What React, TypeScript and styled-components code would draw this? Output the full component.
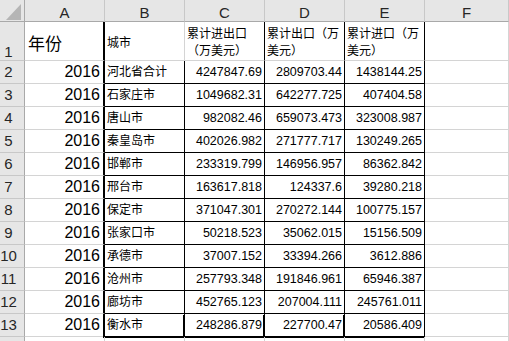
import React from 'react';
import styled, { createGlobalStyle, css } from 'styled-components';

const GRID = '#d4d4d4';
const HEAD_LINE = '#a9a9a9';
const HEAD_SEP = '#c8c8c8';
const HEAD_BG = '#e6e6e6';
const CJK = '"Noto Sans CJK SC", "Liberation Sans", sans-serif';

const GlobalStyle = createGlobalStyle`
  html, body { margin: 0; padding: 0; background: #fff; }
  body { font-family: "Liberation Sans", Arial, sans-serif; color: #000; }
`;

type Edge = 'grid' | 'black' | 'thick';
type Kind = 'year' | 'city' | 'num' | 'label' | 'title' | 'blank';

const edges: Record<Edge, string> = {
  grid: `1px solid ${GRID}`,
  black: '1px solid #000',
  thick: '2px solid #000',
};

const kinds: Record<Kind, ReturnType<typeof css>> = {
  year: css`
    font-size: 16px;
    line-height: 16px;
    justify-content: flex-end;
    align-items: flex-end;
    padding: 0 3px 3px 0;
  `,
  city: css`
    font-family: ${CJK};
    font-size: 12px;
    line-height: 12px;
    align-items: flex-end;
    padding: 0 0 6px 2px;
  `,
  num: css`
    font-size: 12.5px;
    line-height: 12.5px;
    justify-content: flex-end;
    align-items: flex-end;
    padding: 0 2px 5px 0;
  `,
  label: css`
    font-family: ${CJK};
    font-size: 12px;
    line-height: 17px;
    white-space: normal;
    align-items: center;
    padding: 0 1px 0 2px;
  `,
  title: css`
    font-family: ${CJK};
    font-size: 17px;
    line-height: 20px;
    align-items: center;
    padding: 4px 0 0 3px;
  `,
  blank: css``,
};

const Viewport = styled.div`
  width: 509px;
  height: 341px;
  overflow: hidden;
`;

const Sheet = styled.div`
  display: grid;
  grid-template-columns: 25px repeat(5, 80px) 84px;
  grid-template-rows: 22px 39px repeat(13, 23px);
`;

const Corner = styled.div`
  box-sizing: border-box;
  background: ${HEAD_BG};
  border-right: 1px solid ${HEAD_LINE};
  border-bottom: 1px solid ${HEAD_LINE};
  display: flex;
  justify-content: flex-end;
  align-items: flex-end;
  padding: 0 3px 1px 0;
`;

const ColHead = styled.div`
  box-sizing: border-box;
  background: ${HEAD_BG};
  border-right: 1px solid ${HEAD_SEP};
  border-bottom: 1px solid ${HEAD_LINE};
  display: flex;
  justify-content: center;
  align-items: flex-end;
  padding-bottom: 1px;
  font-size: 15px;
  line-height: 15px;
  color: #262626;
`;

const RowHead = styled.div<{ $first?: boolean }>`
  box-sizing: border-box;
  background: ${HEAD_BG};
  border-right: 1px solid ${HEAD_LINE};
  border-bottom: 1px solid ${HEAD_SEP};
  display: flex;
  justify-content: center;
  align-items: flex-end;
  padding: 0 7px ${(p) => (p.$first ? '1px' : '4px')} 0;
  font-size: 15px;
  line-height: 15px;
  color: #262626;
`;

const Cell = styled.div<{ $r?: Edge; $b?: Edge; $kind?: Kind; $closing?: boolean; $open?: boolean }>`
  box-sizing: border-box;
  background: ${(p) => (p.$open ? 'transparent' : '#fff')};
  border-right: ${(p) => edges[p.$r ?? 'grid']};
  border-bottom: ${(p) => edges[p.$b ?? 'grid']};
  display: flex;
  white-space: nowrap;
  overflow: hidden;
  ${(p) => kinds[p.$kind ?? 'blank']};
  ${(p) =>
    p.$closing &&
    css`
      overflow: visible;
      box-shadow: 0 1px 0 0 #000, -2px 1px 0 0 #000;
    `}
`;

const rows: [string, string, string, string][] = [
  ['河北省合计', '4247847.69', '2809703.44', '1438144.25'],
  ['石家庄市', '1049682.31', '642277.725', '407404.58'],
  ['唐山市', '982082.46', '659073.473', '323008.987'],
  ['秦皇岛市', '402026.982', '271777.717', '130249.265'],
  ['邯郸市', '233319.799', '146956.957', '86362.842'],
  ['邢台市', '163617.818', '124337.6', '39280.218'],
  ['保定市', '371047.301', '270272.144', '100775.157'],
  ['张家口市', '50218.523', '35062.015', '15156.509'],
  ['承德市', '37007.152', '33394.266', '3612.886'],
  ['沧州市', '257793.348', '191846.961', '65946.387'],
  ['廊坊市', '452765.123', '207004.111', '245761.011'],
  ['衡水市', '248286.879', '227700.47', '20586.409'],
];

const letters = ['A', 'B', 'C', 'D', 'E', 'F'];

export default function App() {
  return (
    <Viewport>
      <GlobalStyle />
      <Sheet>
        <Corner>
          <svg width="15" height="16" viewBox="0 0 15 16">
            <polygon points="0,16 15,16 15,0" fill="#b5b5b5" />
          </svg>
        </Corner>
        {letters.map((l) => (
          <ColHead key={l}>{l}</ColHead>
        ))}

        <RowHead $first>1</RowHead>
        <Cell $r="thick" $kind="title">年份</Cell>
        <Cell $kind="label">城市</Cell>
        <Cell $r="black" $kind="label">累计进出口（万美元）</Cell>
        <Cell $r="black" $kind="label">累计出口（万美元）</Cell>
        <Cell $r="black" $kind="label">累计进口（万美元）</Cell>
        <Cell />

        {rows.map((r, i) => {
          const last = i === rows.length - 1;
          return (
            <React.Fragment key={r[0]}>
              <RowHead>{i + 2}</RowHead>
              <Cell $r="thick" $kind="year">2016</Cell>
              <Cell $r="black" $b="black" $kind="city" $closing={last}>{r[0]}</Cell>
              <Cell $r="black" $b="black" $kind="num" $closing={last}>{r[1]}</Cell>
              <Cell $r="black" $b="black" $kind="num" $closing={last}>{r[2]}</Cell>
              <Cell $r="black" $b="black" $kind="num" $closing={last}>{r[3]}</Cell>
              <Cell />
            </React.Fragment>
          );
        })}

        <RowHead />
        <Cell $open />
        <Cell $open />
        <Cell $open />
        <Cell $open />
        <Cell $open />
        <Cell $open />
      </Sheet>
    </Viewport>
  );
}
